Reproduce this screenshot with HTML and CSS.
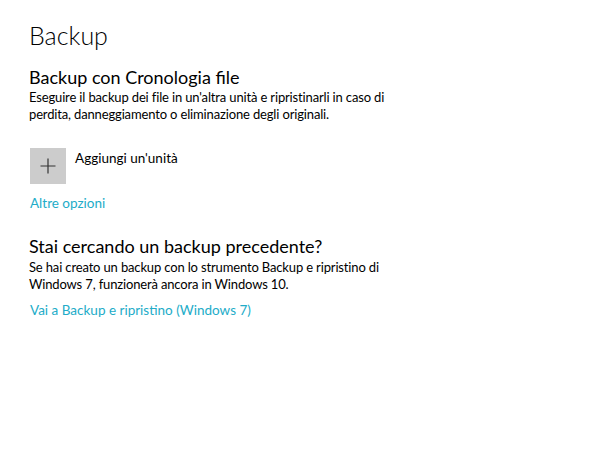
FILE: index.html
```html
<!DOCTYPE html>
<html lang="it">
<head>
  <meta charset="UTF-8">
  <title>Backup</title>
  <link rel="stylesheet" href="styles.css">
</head>
<body>
<div class="page">
  <h1>Backup</h1>

  <section class="group">
    <h2>Backup con Cronologia file</h2>
    <p>Eseguire il backup dei file in un'altra unità e ripristinarli in caso di<br>perdita, danneggiamento o eliminazione degli originali.</p>

    <div class="add-drive">
      <div class="add-btn">
        <svg width="16" height="16" viewBox="0 0 16 16"><path d="M8 0.5V15.5M0.5 8H15.5" stroke="#333" stroke-width="1.2" fill="none"/></svg>
      </div>
      <span>Aggiungi un'unità</span>
    </div>

    <a class="link" href="#">Altre opzioni</a>
  </section>

  <section class="group second">
    <h2>Stai cercando un backup precedente?</h2>
    <p>Se hai creato un backup con lo strumento Backup e ripristino di<br>Windows 7, funzionerà ancora in Windows 10.</p>
    <a class="link" href="#">Vai a Backup e ripristino (Windows 7)</a>
  </section>
</div>
</body>
</html>
```

FILE: styles.css
```css
* { box-sizing: border-box; }
body {
  margin: 0;
  background: #fff;
  font-family: Lato, 'Open Sans', sans-serif;
  color: #000;
}
.page {
  padding: 18px 29px;
}
h1 {
  margin: 0;
  font-size: 25px;
  font-weight: 300;
  line-height: 34px;
}
h2 {
  margin: 0;
  font-size: 18px;
  font-weight: 400;
  line-height: 22px;
}
.group {
  margin-top: 14px;
}
.group p {
  margin: 1px 0 0;
  font-size: 13px;
  letter-spacing: -0.15px;
  line-height: 17px;
}
.add-drive {
  display: flex;
  align-items: flex-start;
  gap: 9px;
  margin-top: 25px;
  margin-left: 1px;
}
.add-btn {
  width: 36px;
  height: 36px;
  background: #cccccc;
  display: flex;
  align-items: center;
  justify-content: center;
}
.add-drive span {
  font-size: 13.5px;
  line-height: 17px;
  margin-top: 2px;
}
.link {
  display: block;
  color: #22acc8;
  text-decoration: none;
  font-size: 13.5px;
  line-height: 17px;
  margin-top: 11px;
  margin-left: 1px;
}
.second {
  margin-top: 23px;
}
.second p {
  margin-top: 2px;
}
.second .link {
  margin-top: 9px;
}
```
